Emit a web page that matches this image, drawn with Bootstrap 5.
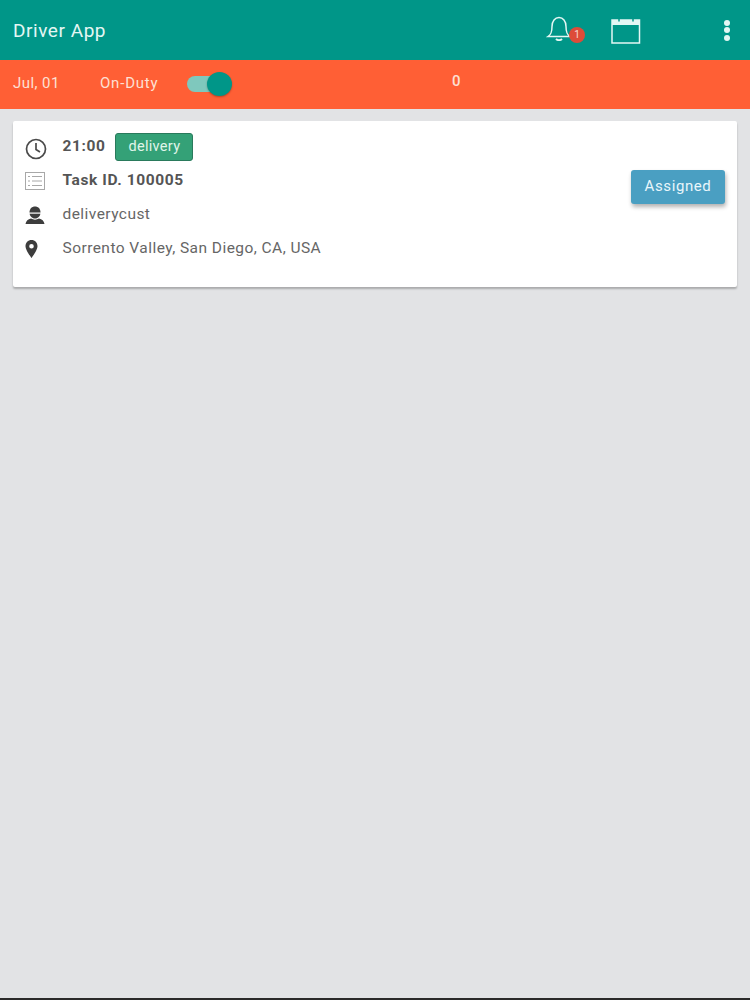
<!DOCTYPE html>
<html lang="en">
<head>
    <meta charset="UTF-8">
    <meta name="viewport" content="width=device-width, initial-scale=1.0">
    <title>Driver App</title>
    <link href="https://cdn.jsdelivr.net/npm/bootstrap@5.3.0/dist/css/bootstrap.min.css" rel="stylesheet">
    <style>
        html, body {
            height: 100%;
        }
        body {
            font-family: Roboto, "Liberation Sans", sans-serif;
            background: #e2e3e5;
            overflow: hidden;
        }
        .app-shell {
            height: 1000px;
            border-bottom: 2px solid #2a2a2a;
        }
        .app-bar {
            height: 60px;
            background: #009688;
            color: #e4f7f4;
            padding: 0 20px 0 13px;
        }
        .app-title {
            font-size: 19px;
            letter-spacing: .55px;
            padding-top: 3px;
        }
        .bell-wrap {
            width: 40px;
            height: 34px;
            margin-right: 25px;
        }
        .bell-count {
            position: absolute;
            left: 23px;
            top: 14px;
            width: 16px;
            height: 16px;
            border-radius: 50%;
            background: #dd4b39;
            color: #f7dcd6;
            font-size: 10px;
            line-height: 16px;
            text-align: center;
        }
        .menu-dots {
            margin-left: 83px;
            gap: 1.5px;
        }
        .menu-dots span {
            width: 6px;
            height: 6px;
            border-radius: 50%;
            background: #e4f7f4;
        }
        .status-bar {
            height: 49px;
            background: #ff5f35;
            color: #fde0d4;
            font-size: 15px;
            letter-spacing: .45px;
            padding: 0 0 3px 13px;
        }
        .status-date {
            width: 87px;
        }
        .status-duty {
            width: 87px;
            letter-spacing: .8px;
        }
        .duty-switch {
            width: 45px;
            height: 24px;
            margin-top: 1px;
        }
        .duty-track {
            position: absolute;
            left: 0;
            top: 4px;
            width: 36px;
            height: 16px;
            border-radius: 8px;
            background: #7fc8bd;
        }
        .duty-knob {
            position: absolute;
            right: 0;
            top: 0;
            width: 25px;
            height: 24px;
            border-radius: 50%;
            background: #009688;
            box-shadow: 0 1px 2px rgba(0, 0, 0, .3);
        }
        .status-count {
            margin-left: 220px;
            margin-top: -4px;
            font-weight: 500;
        }
        .task-card {
            margin: 12px 13px 0;
            height: 166px;
            background: #fff;
            border: 0;
            border-radius: 2px;
            box-shadow: 0 2px 2px rgba(0, 0, 0, .25);
            padding: 9px 12px 0 12px;
            color: #666;
            font-size: 15.5px;
            letter-spacing: .45px;
        }
        .task-line {
            height: 34px;
        }
        .task-icon {
            width: 37.5px;
            flex: none;
        }
        .task-clock {
            padding-top: 3px;
        }
        .task-strong {
            font-weight: 700;
            color: #555;
            letter-spacing: .6px;
        }
        .task-type {
            margin-left: 10px;
            height: 28px;
            padding: 0 12px;
            background: #34a177;
            border: 1px solid #2a7a5c;
            border-radius: 3px;
            color: #e0f5ea;
            font-size: 14.5px;
            letter-spacing: .3px;
            line-height: 25px;
        }
        .task-status {
            width: 94px;
            height: 34px;
            margin-top: 40px;
            padding: 0 0 2px;
            background: #4a9fc2;
            border: 0;
            border-radius: 3px;
            color: #e9f6fb;
            font-size: 15px;
            letter-spacing: .6px;
            box-shadow: 1px 3px 4px rgba(0, 0, 0, .3);
        }
    </style>
</head>
<body>
    <div class="app-shell">
        <header class="app-bar d-flex align-items-center">
            <div class="app-title flex-grow-1">Driver App</div>
            <div class="bell-wrap position-relative">
                <svg width="28" height="28" viewBox="0 0 28 28" fill="none" stroke="#e4f7f4" stroke-width="1.5">
                    <path d="M2 23.5c3-2 4-4 4-10 0-5.500 3-9 7-9s7 3.500 7 9c0 6 1 8 4 10z"/>
                    <path d="M10 26c1.500 1.500 4.500 1.500 6 0" stroke-width="2"/>
                </svg>
                <span class="bell-count">1</span>
            </div>
            <svg width="30" height="27" viewBox="0 0 30 27" fill="none" stroke="#e4f7f4">
                <rect x="1" y="3" width="27.500" height="23" stroke-width="1.500"/>
                <path d="M1 5.500h27.500" stroke-width="5"/>
                <path d="M8 .5v4M22 .5v4" stroke="#009688" stroke-width="1.500"/>
            </svg>
            <div class="menu-dots d-flex flex-column">
                <span></span><span></span><span></span>
            </div>
        </header>

        <div class="status-bar d-flex align-items-center">
            <div class="status-date">Jul, 01</div>
            <div class="status-duty">On-Duty</div>
            <div class="duty-switch position-relative">
                <span class="duty-track"></span>
                <span class="duty-knob"></span>
            </div>
            <div class="status-count">0</div>
        </div>

        <div class="task-card card flex-row justify-content-between">
            <div>
                <div class="task-line d-flex align-items-center">
                    <span class="task-icon task-clock d-flex">
                        <svg width="22" height="22" viewBox="0 0 22 22" fill="none" stroke="#4a4a4a" stroke-width="1.700">
                            <circle cx="11" cy="11" r="9.500"/>
                            <path d="M11 5v6.500l4 2.500"/>
                        </svg>
                    </span>
                    <span class="task-strong">21:00</span>
                    <span class="task-type">delivery</span>
                </div>
                <div class="task-line d-flex align-items-center">
                    <span class="task-icon d-flex">
                        <svg width="20" height="18" viewBox="0 0 20 18" fill="none" stroke="#a8a8a8">
                            <rect x=".5" y=".5" width="19" height="17"/>
                            <path d="M3 4.500h2M3 9h2M3 13.500h2M7 4.500h10M7 9h10M7 13.500h10"/>
                        </svg>
                    </span>
                    <span class="task-strong">Task ID. 100005</span>
                </div>
                <div class="task-line d-flex align-items-center">
                    <span class="task-icon d-flex">
                        <svg width="20" height="20" viewBox="0 0 20 20" fill="#3d3d3d">
                            <path d="M4.500 7.500C4.500 3.500 7 1.500 10 1.500s5.500 2 5.500 6c0 3.500-2.500 6-5.500 6s-5.500-2.500-5.500-6z"/>
                            <path d="M.5 19c.5-3 2.500-5 5.500-5.500 2.500 1.500 5.500 1.500 8 0 3 .5 5 2.500 5.500 5.500z"/>
                            <path d="M4 7.500h12v1.200H4z" fill="#fff"/>
                        </svg>
                    </span>
                    <span>deliverycust</span>
                </div>
                <div class="task-line d-flex align-items-center">
                    <span class="task-icon d-flex">
                        <svg width="13" height="18" viewBox="0 0 13 18" fill="#3d3d3d">
                            <path fill-rule="evenodd" d="M6.500 0C3 0 .5 2.700.5 6.200c0 4 6 11.800 6 11.800s6-7.800 6-11.800C12.500 2.700 10 0 6.500 0zm0 4a2.300 2.300 0 1 1 0 4.600 2.300 2.300 0 0 1 0-4.600z"/>
                        </svg>
                    </span>
                    <span>Sorrento Valley, San Diego, CA, USA</span>
                </div>
            </div>
            <button type="button" class="btn task-status">Assigned</button>
        </div>
    </div>
    <script src="https://cdn.jsdelivr.net/npm/bootstrap@5.3.0/dist/js/bootstrap.bundle.min.js"></script>
</body>
</html>
